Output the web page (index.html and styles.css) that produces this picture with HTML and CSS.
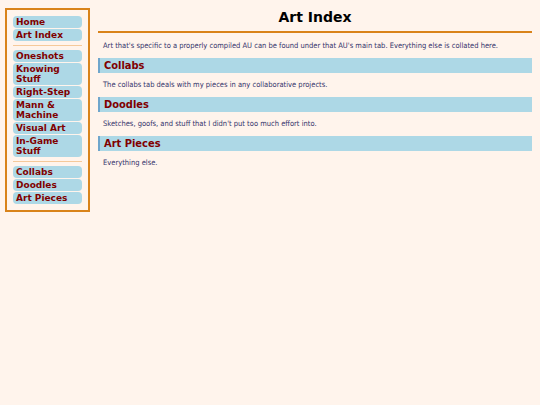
FILE: index.html
```html
<!DOCTYPE html>
<html lang="en">
<head>
    <meta charset="UTF-8">
    <meta name="viewport" content="width=device-width, initial-scale=1.0">
    <title>Art Index</title>
    <link rel="stylesheet" href="styles.css">
</head>
<body>
    <div class="page">
        <div class="sidebar">
            <div class="nav-group">
                <a href="#">Home</a>
                <a href="#">Art Index</a>
            </div>
            <hr class="nav-sep">
            <div class="nav-group">
                <a href="#">Oneshots</a>
                <a href="#">Knowing Stuff</a>
                <a href="#">Right-Step</a>
                <a href="#">Mann &amp; Machine</a>
                <a href="#">Visual Art</a>
                <a href="#">In-Game Stuff</a>
            </div>
            <hr class="nav-sep">
            <div class="nav-group">
                <a href="#">Collabs</a>
                <a href="#">Doodles</a>
                <a href="#">Art Pieces</a>
            </div>
        </div>

        <div class="main">
            <h1 class="page-title">Art Index</h1>
            <p>Art that's specific to a properly compiled AU can be found under that AU's main tab. Everything else is collated here.</p>

            <h2 class="section-title">Collabs</h2>
            <p>The collabs tab deals with my pieces in any collaborative projects.</p>

            <h2 class="section-title">Doodles</h2>
            <p>Sketches, goofs, and stuff that I didn't put too much effort into.</p>

            <h2 class="section-title">Art Pieces</h2>
            <p>Everything else.</p>
        </div>
    </div>
</body>
</html>
```

FILE: styles.css
```css
body {
    font-family: "DejaVu Sans", Verdana, sans-serif;
    margin: 0;
    padding: 0;
    background-color: #fff4ec;
}
.page {
    display: flex;
    align-items: flex-start;
    gap: 8px;
    padding: 8px 8px 8px 5px;
}
.sidebar {
    width: 69px;
    flex-shrink: 0;
    border: 2px solid #d9831a;
    padding: 6px;
}
.nav-group {
    display: flex;
    flex-direction: column;
    gap: 1px;
}
.nav-group a {
    display: block;
    background-color: #add8e6;
    color: #800000;
    font-weight: bold;
    font-size: 9px;
    line-height: 10px;
    padding: 1px 3px;
    border-radius: 4px;
    text-decoration: none;
}
.nav-sep {
    border: none;
    border-top: 1px solid #f5c99a;
    margin: 4px 0;
}
.main {
    flex: 1;
}
.page-title {
    font-size: 14px;
    line-height: 17px;
    text-align: center;
    margin: 0;
    padding: 1px 0 5px 0;
    border-bottom: 2px solid #d9831a;
    color: #000;
}
.main p {
    font-family: "DejaVu Sans Condensed", "DejaVu Sans", sans-serif;
    color: #33336b;
    font-size: 7.5px;
    line-height: 8px;
    margin: 8px 5px;
}
.page-title + p {
    margin-top: 9px;
}
.section-title {
    font-family: "DejaVu Sans Condensed", "DejaVu Sans", sans-serif;
    background-color: #add8e6;
    border-left: 2px solid #6fa6cc;
    color: #800000;
    font-size: 11px;
    line-height: 13px;
    margin: 0;
    padding: 1px 4px;
}
```
